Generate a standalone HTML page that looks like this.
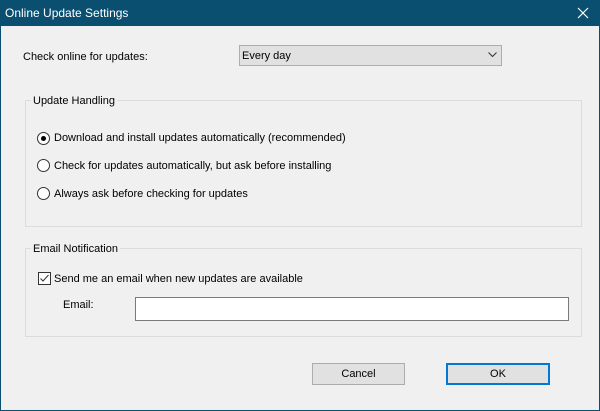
<!DOCTYPE html>
<html><head><style>
*{box-sizing:border-box;margin:0;padding:0}
body{width:600px;height:411px;background:#0a4f70;font-family:"Liberation Sans",sans-serif;font-size:11px;color:#000;position:relative;overflow:hidden}
.t{position:absolute;white-space:nowrap}
#client{position:absolute;left:1px;top:26px;width:598px;height:384px;background:#f0f0f0}
.grp{position:absolute;border:1px solid #dcdcdc}
.lbl{position:absolute;background:#f0f0f0;padding:0 2px}
.radio{position:absolute;width:13px;height:13px;border:1px solid #333;border-radius:50%;background:#fff}
.btn{position:absolute;background:#e1e1e1;border:1px solid #adadad;text-align:center;line-height:21px}
</style></head><body>
<div class="t" style="left:5px;top:6px;color:#fff;font-size:12px">Online Update Settings</div>
<svg style="position:absolute;left:577px;top:7px" width="12" height="12"><path d="M1 1L11 11M11 1L1 11" stroke="#fff" stroke-width="1.2"/></svg>
<div id="client"></div>
<div class="t" style="left:23px;top:51px">Check online for updates:</div>
<div style="position:absolute;left:239px;top:45px;width:263px;height:21px;background:#e1e1e1;border:1px solid #adadad"></div>
<div class="t" style="left:242px;top:50px">Every day</div>
<svg style="position:absolute;left:488px;top:52px" width="10" height="6"><path d="M0.5 0.5L4.5 4.5L8.5 0.5" stroke="#333" fill="none"/></svg>
<div class="grp" style="left:25px;top:100px;width:557px;height:127px"></div>
<div class="lbl t" style="left:31px;top:95px">Update Handling</div>
<div class="radio" style="left:37px;top:132px"><div style="position:absolute;left:3px;top:3px;width:5px;height:5px;border-radius:50%;background:#000"></div></div>
<div class="t" style="left:54px;top:132px">Download and install updates automatically (recommended)</div>
<div class="radio" style="left:37px;top:159px"></div>
<div class="t" style="left:54px;top:160px">Check for updates automatically, but ask before installing</div>
<div class="radio" style="left:37px;top:187px"></div>
<div class="t" style="left:54px;top:188px">Always ask before checking for updates</div>
<div class="grp" style="left:25px;top:248px;width:557px;height:89px"></div>
<div class="lbl t" style="left:31px;top:243px">Email Notification</div>
<div style="position:absolute;left:38px;top:272px;width:13px;height:13px;border:1px solid #333;background:#fff"></div>
<svg style="position:absolute;left:38px;top:272px" width="13" height="13"><path d="M2.5 6.5L5 9L10.5 3" stroke="#333" fill="none"/></svg>
<div class="t" style="left:54px;top:273px">Send me an email when new updates are available</div>
<div class="t" style="left:63px;top:299px">Email:</div>
<div style="position:absolute;left:135px;top:297px;width:434px;height:24px;background:#fff;border:1px solid #7a7a7a"></div>
<div class="btn" style="left:312px;top:363px;width:93px;height:22px">Cancel</div>
<div class="btn" style="left:446px;top:363px;width:104px;height:22px;border:2px solid #0078d7;line-height:19px">OK</div>
</body></html>
